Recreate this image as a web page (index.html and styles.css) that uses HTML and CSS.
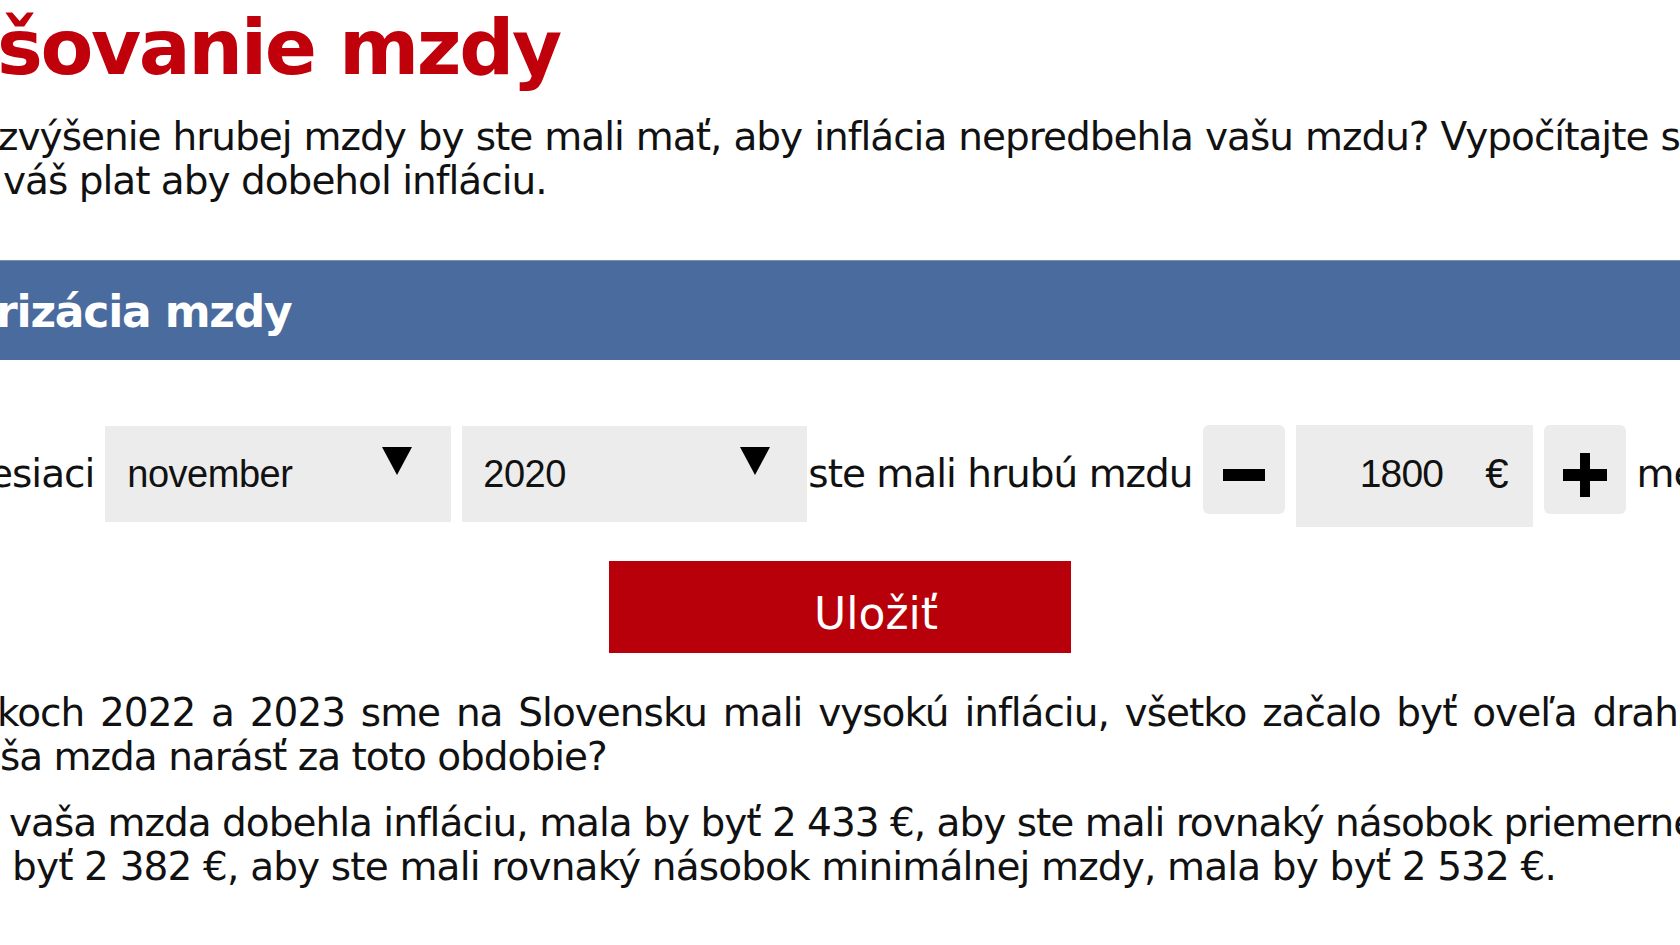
FILE: index.html
```html
<!DOCTYPE html>
<html lang="sk">
<head>
<meta charset="utf-8">
<title>Valorizácia mzdy</title>
<link rel="stylesheet" href="styles.css">
</head>
<body>
<main class="page">
  <h1 class="title">šovanie mzdy</h1>
  <p class="intro">
    <span class="line first-line">zvýšenie hrubej mzdy by ste mali mať, aby inflácia nepredbehla vašu mzdu? Vypočítajte s</span>
    <span class="line second-line">váš plat aby dobehol infláciu.</span>
  </p>

  <section class="panel">
    <h2 class="panel-head">rizácia mzdy</h2>
    <form class="calc">
      <div class="row">
        <span class="label lead">esiaci</span>
        <div class="select">
          <span class="select-value">november</span>
          <svg class="caret" width="30" height="28" viewBox="0 0 30 28"><polygon points="0,0 30,0 15,28" fill="#000"/></svg>
        </div>
        <div class="select">
          <span class="select-value">2020</span>
          <svg class="caret" width="30" height="28" viewBox="0 0 30 28"><polygon points="0,0 30,0 15,28" fill="#000"/></svg>
        </div>
        <span class="label tight">ste mali hrubú mzdu</span>
        <button type="button" class="step" aria-label="menej">
          <svg width="82" height="89" viewBox="0 0 82 89"><rect x="20" y="44" width="42" height="12" fill="#000"/></svg>
        </button>
        <div class="amount">
          <span class="amount-value">1800</span>
          <span class="currency">€</span>
        </div>
        <button type="button" class="step" aria-label="viac">
          <svg width="82" height="89" viewBox="0 0 82 89"><rect x="19" y="44" width="44" height="12" fill="#000"/><rect x="36" y="28" width="10" height="44" fill="#000"/></svg>
        </button>
        <span class="label">me</span>
      </div>
      <div class="actions">
        <button type="button" class="save">Uložiť</button>
      </div>
    </form>
  </section>

  <section class="result">
    <p class="para">
      <span class="line justified">koch 2022 a 2023 sme na Slovensku mali vysokú infláciu, všetko začalo byť oveľa drah</span>
      <span class="line">ša mzda narásť za toto obdobie?</span>
    </p>
    <p class="para answer">
      <span class="line a1">vaša mzda dobehla infláciu, mala by byť 2 433 €, aby ste mali rovnaký násobok priemerne</span>
      <span class="line a2">byť 2 382 €, aby ste mali rovnaký násobok minimálnej mzdy, mala by byť 2 532 €.</span>
    </p>
  </section>
</main>
</body>
</html>
```

FILE: styles.css
```css
html, body {
  margin: 0;
  padding: 0;
  background: #ffffff;
}

body {
  width: 1680px;
  height: 945px;
  overflow: hidden;
  font-family: "DejaVu Sans", Verdana, sans-serif;
  font-size: 39px;
  letter-spacing: -1px;
  color: #111111;
}

.page {
  display: flex;
  flex-direction: column;
}

.title {
  margin: 0 0 0 -3px;
  padding-top: 9px;
  font-size: 77px;
  line-height: 77px;
  font-weight: bold;
  letter-spacing: -2.4px;
  color: #c0000a;
  white-space: nowrap;
}

.intro {
  margin: 29px 0 0;
  line-height: 44px;
}

.line {
  display: block;
  white-space: nowrap;
}

.intro .first-line {
  margin-left: -2px;
  word-spacing: 0.6px;
}

.intro .second-line {
  margin-left: 3px;
}

.panel {
  margin-top: 57px;
}

.panel-head {
  margin: 0;
  height: 100px;
  box-sizing: border-box;
  padding: 2px 0 0 0;
  text-indent: -4px;
  border-top: 1px solid #7f8fa8;
  background: #4a6b9d;
  color: #ffffff;
  font-size: 44px;
  line-height: 97px;
  font-weight: bold;
  letter-spacing: -1.2px;
  white-space: nowrap;
}

.calc {
  margin: 65px 0 0;
}

.row {
  display: flex;
  align-items: flex-start;
  gap: 11px;
  white-space: nowrap;
}

.label {
  padding-top: 27px;
  line-height: 44px;
  flex: none;
}

.label.lead {
  margin-left: -11px;
}

.label.tight {
  margin-left: -10px;
  margin-right: -1px;
}

.select {
  flex: none;
  display: flex;
  align-items: flex-start;
  justify-content: space-between;
  box-sizing: border-box;
  width: 346px;
  height: 96px;
  margin-top: 1px;
  padding: 29px 39px 0 22px;
  background: #ececec;
  font-family: "Liberation Sans", Arial, sans-serif;
  font-size: 38px;
  line-height: 38px;
  letter-spacing: -0.5px;
  color: #111111;
}

.select + .select {
  width: 345px;
  padding-left: 21px;
  padding-right: 37px;
}

.caret {
  margin-top: -8px;
  flex: none;
}

.step {
  flex: none;
  width: 82px;
  height: 89px;
  padding: 0;
  border: 0;
  border-radius: 6px;
  background: #ececec;
  display: block;
}

.step svg {
  display: block;
}

.amount {
  flex: none;
  display: flex;
  justify-content: flex-end;
  align-items: flex-start;
  box-sizing: border-box;
  width: 237px;
  height: 102px;
  padding: 30px 24px 0 0;
  background: #ececec;
  font-family: "Liberation Sans", Arial, sans-serif;
  font-size: 39px;
  line-height: 38px;
  letter-spacing: -0.8px;
}

.currency {
  margin-left: 42px;
  font-size: 42px;
  letter-spacing: 0;
}

.actions {
  display: flex;
  justify-content: flex-start;
  margin-top: 34px;
  padding-left: 609px;
}

.save {
  display: flex;
  justify-content: center;
  align-items: flex-start;
  box-sizing: border-box;
  width: 462px;
  height: 92px;
  padding: 31px 0 0 72px;
  border: 0;
  background: #b8000a;
  color: #ffffff;
  font-family: "DejaVu Sans", Verdana, sans-serif;
  font-size: 44px;
  line-height: 44px;
  letter-spacing: 0;
}

.result {
  margin-top: 38px;
}

.para {
  margin: 0;
  line-height: 44px;
}

.para + .para {
  margin-top: 22px;
}

.justified {
  margin-left: -3px;
  word-spacing: 4.4px;
}

.answer .a1 {
  margin-left: 9px;
}

.answer .a2 {
  margin-left: 12px;
  letter-spacing: -0.85px;
}
```
